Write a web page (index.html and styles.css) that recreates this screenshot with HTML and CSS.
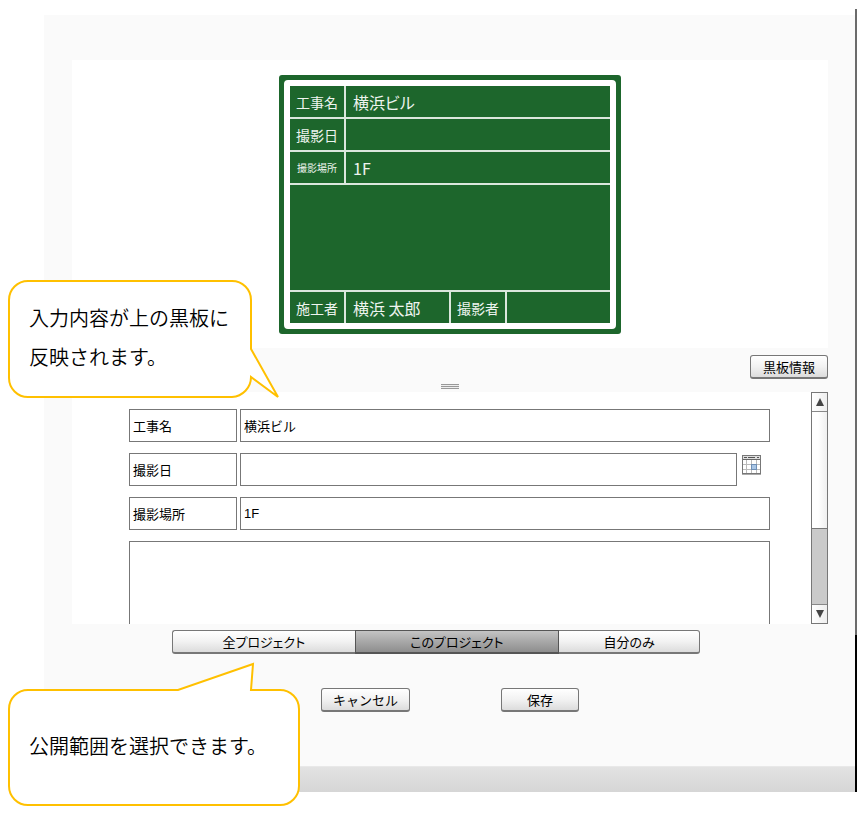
FILE: index.html
```html
<!DOCTYPE html>
<html lang="ja">
<head>
  <meta charset="UTF-8" />
  <title>黒板情報</title>
  <link rel="stylesheet" href="styles.css">
</head>
<body>
  <div class="window">
    <main class="dialog">
      <section class="preview">
        <div class="board">
          <div class="board-grid">
            <span class="name">工事名</span>
            <span class="value wide">横浜ビル</span>
            <span class="name">撮影日</span>
            <span class="value wide"></span>
            <span class="name small">撮影場所</span>
            <span class="value wide">1F</span>
            <span class="memo"></span>
            <span class="name">施工者</span>
            <span class="value">横浜 太郎</span>
            <span class="name">撮影者</span>
            <span class="value"></span>
          </div>
        </div>
      </section>

      <div class="splitter">
        <button type="button" class="btn info-btn">黒板情報</button>
        <span class="handle"></span>
      </div>

      <form class="form-area">
        <div class="fields">
          <div class="row">
            <label for="koujimei">工事名</label>
            <input type="text" id="koujimei" value="横浜ビル" />
          </div>
          <div class="row">
            <label for="satsueibi">撮影日</label>
            <input type="text" id="satsueibi" />
            <button type="button" class="calendar-btn" aria-label="カレンダー">
              <svg width="20" height="20" viewBox="0 0 20 20">
                <rect x="0.5" y="0.5" width="18" height="18" fill="#fff" stroke="#777" />
                <rect x="1" y="1" width="17" height="3" fill="#ddd" />
                <path d="M2 2.5h3M6 2.5h7M15 2.5h2" stroke="#555" />
                <path d="M1 4.5h17" stroke="#666" />
                <path d="M4.5 5v13M9.5 5v13M14.5 5v13M1 9.5h17M1 14.5h17" stroke="#bbb" />
                <rect x="9.5" y="9.5" width="5" height="5" fill="#a9c6e6" stroke="#6f8fb5" />
                <path d="M0 19.5h19" stroke="#aaa" />
              </svg>
            </button>
          </div>
          <div class="row">
            <label for="basho">撮影場所</label>
            <input type="text" id="basho" value="1F" />
          </div>
          <textarea class="memo-input" aria-label="メモ"></textarea>
        </div>
        <div class="scrollbar">
          <button type="button" class="arrow" aria-label="上へ">
            <svg width="8" height="8" viewBox="0 0 8 8"><path d="M4 0L8 8H0z" fill="#444" /></svg>
          </button>
          <div class="track"><div class="thumb"></div></div>
          <button type="button" class="arrow" aria-label="下へ">
            <svg width="8" height="8" viewBox="0 0 8 8"><path d="M0 0H8L4 8z" fill="#444" /></svg>
          </button>
        </div>
      </form>

      <div class="scope">
        <button type="button" class="all">全プロジェクト</button>
        <button type="button" class="this active" aria-pressed="true">このプロジェクト</button>
        <button type="button" class="mine">自分のみ</button>
      </div>

      <div class="actions">
        <button type="button" class="btn cancel-btn">キャンセル</button>
        <button type="button" class="btn">保存</button>
      </div>
    </main>
    <div class="status-bar"></div>
  </div>

  <div class="callout callout-input">
    <svg width="272" height="120" viewBox="0 0 272 120">
      <path d="M20 1H224A19 19 0 0 1 243 20V69L270 117L243 97A20 20 0 0 1 224 117H20A19 19 0 0 1 1 98V20A19 19 0 0 1 20 1Z" />
    </svg>
    <p>入力内容が上の黒板に<br>反映されます。</p>
  </div>

  <div class="callout callout-scope">
    <svg width="293" height="146" viewBox="0 0 293 146">
      <path d="M20 28H170L245 2L243 28H272A19 19 0 0 1 291 47V124A19 19 0 0 1 272 143H20A19 19 0 0 1 1 124V47A19 19 0 0 1 20 28Z" />
    </svg>
    <p>公開範囲を選択できます。</p>
  </div>
</body>
</html>
```
FILE: styles.css
```css
* {
  box-sizing: border-box;
}

body {
  position: relative;
  margin: 0;
  padding: 9px 6px 24px 44px;
  background: #fff;
  color: #000;
  font-family: "Liberation Sans", "Noto Sans CJK JP", sans-serif;
  font-size: 13px;
}

button,
input,
textarea {
  font: inherit;
  color: inherit;
}

/* 右端の線 */
.window {
  padding: 6px 2px 0 0;
  background: linear-gradient(#6b6b6b 80%, #000 80%) right / 2px 100% no-repeat;
}

.dialog {
  padding: 45px 27px 54px 28px;
  background: #fafafa;
}

.status-bar {
  height: 26px;
  background: linear-gradient(#e2e2e2, #d6d6d6);
  border-top: 1px solid #e8e8e8;
}

/* 黒板 */
.preview {
  display: flex;
  justify-content: center;
  padding: 15px 0 14px;
  background: #fff;
}

.board {
  width: 342px;
  padding: 5px;
  background: #1d662c;
  border-radius: 3px;
}

.board-grid {
  display: grid;
  grid-template-columns: 54px 1fr 54px 1fr;
  grid-template-rows: 31px 31px 31px 105px 31px;
  gap: 2px;
  border: 6px solid #fff;
  border-radius: 4px;
  background: #dbe7dd;
  color: #eef4ef;
  font-family: "Noto Sans CJK JP", sans-serif;
}

.board-grid span {
  display: flex;
  align-items: center;
  background: #1d662c;
  white-space: nowrap;
}

.board-grid .name {
  justify-content: center;
  font-size: 14px;
}

.board-grid .small {
  font-size: 10px;
}

.board-grid .value {
  padding-left: 7px;
  font-size: 16px;
  font-feature-settings: "palt";
}

.board-grid .wide {
  grid-column: span 3;
}

.board-grid .memo {
  grid-column: span 4;
}

/* 仕切り */
.splitter {
  display: flex;
  flex-direction: column;
  padding: 7px 0 3px;
}

.btn {
  width: 78px;
  height: 24px;
  padding: 0;
  border: 1px solid #777;
  border-bottom-width: 2px;
  border-radius: 3px;
  background: linear-gradient(#fff, #f2f2f2 50%, #dcdcdc);
  cursor: pointer;
}

.info-btn {
  align-self: flex-end;
}

.handle {
  width: 18px;
  height: 5px;
  margin: 5px auto 0;
  border: solid #999;
  border-width: 1px 0;
  background: linear-gradient(#eee 1px, #999 1px, #999 2px, #eee 2px);
}

/* 入力欄 */
.form-area {
  display: flex;
  height: 232px;
  background: #fff;
}

.fields {
  flex: 1;
  display: flex;
  flex-direction: column;
  gap: 11px;
  padding: 17px 41px 0 57px;
  overflow: hidden;
}

.row {
  display: flex;
  flex-shrink: 0;
  height: 33px;
}

.row label {
  display: flex;
  align-items: center;
  width: 108px;
  margin-right: 3px;
  padding-left: 3px;
  border: 1px solid #777;
}

.row input {
  flex: 1;
  min-width: 0;
  padding: 0 3px;
  border: 1px solid #777;
  background: #fff;
}

.calendar-btn {
  width: 20px;
  height: 20px;
  margin: 2px 8px 0 5px;
  padding: 0;
  border: 0;
  background: none;
}

.calendar-btn svg {
  display: block;
}

.memo-input {
  flex-shrink: 0;
  height: 120px;
  border: 1px solid #777;
  resize: none;
}

.scrollbar {
  display: flex;
  flex-direction: column;
  width: 17px;
  border: 1px solid #777;
}

.arrow {
  display: flex;
  align-items: center;
  justify-content: center;
  height: 18px;
  padding: 0;
  border: 0;
  background: linear-gradient(90deg, #fff, #eee);
}

.track {
  flex: 1;
  border: solid #888;
  border-width: 1px 0;
  background: #cacaca;
}

.thumb {
  height: 61%;
  border-bottom: 1px solid #777;
  background: linear-gradient(90deg, #fff 40%, #efefef);
}

/* 公開範囲 */
.scope {
  display: flex;
  margin: 6px 128px 0 100px;
}

.scope button {
  height: 24px;
  padding: 0;
  border: 1px solid #777;
  border-bottom-width: 2px;
  background: linear-gradient(#fff, #f2f2f2 50%, #dcdcdc);
  font-feature-settings: "palt";
  cursor: pointer;
}

.scope .all {
  flex: 183;
  border-right: 0;
  border-radius: 3px 0 0 3px;
}

.scope .this {
  flex: 204;
}

.scope .mine {
  flex: 141;
  border-left: 0;
  border-radius: 0 3px 3px 0;
}

.scope .active {
  border-color: #555;
  background: linear-gradient(#c4c4c4, #a8a8a8 50%, #8e8e8e);
}

.actions {
  display: flex;
  justify-content: center;
  gap: 91px;
  margin-top: 34px;
}

.cancel-btn {
  width: 89px;
}

/* 吹き出し */
.callout {
  position: absolute;
  left: 8px;
}

.callout svg {
  display: block;
  fill: #fff;
  stroke: #ffc000;
  stroke-width: 2;
}

.callout p {
  position: absolute;
  left: 21px;
  margin: 0;
  font-family: "Noto Sans CJK JP", sans-serif;
  font-size: 20px;
  font-weight: 350;
  line-height: 39px;
  white-space: nowrap;
}

.callout-input {
  top: 280px;
}

.callout-input p {
  top: 18px;
}

.callout-scope {
  top: 662px;
}

.callout-scope p {
  top: 64px;
}
```
